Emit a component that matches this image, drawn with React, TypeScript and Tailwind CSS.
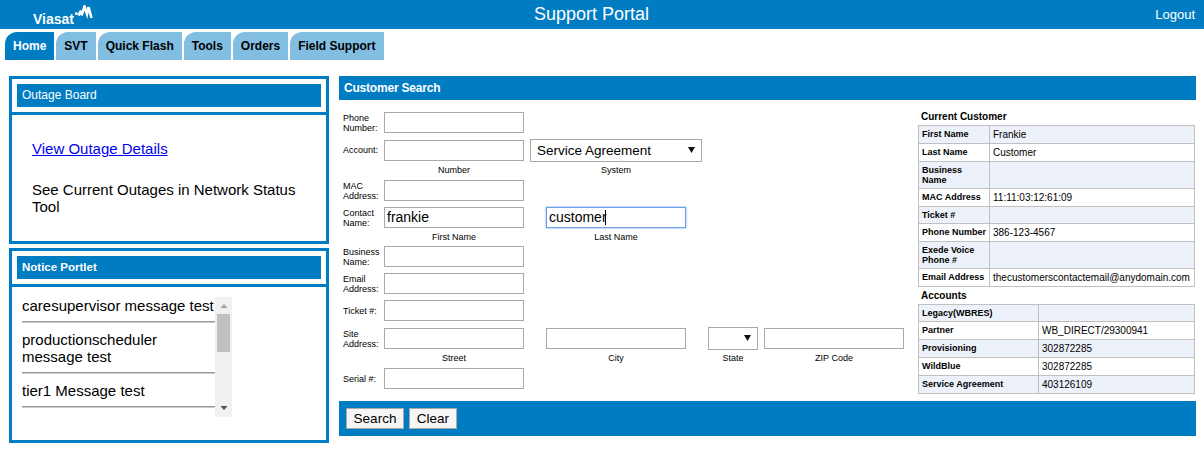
import React from "react";

const inputClass =
  "block h-[21px] w-[140px] border border-[#a9a9a9] bg-white px-[2px] text-[14px] text-black outline-none";

const Logo = () => (
  <div className="flex items-start pl-[33px] pt-[5px]">
    <span className="mt-[8px] text-[14px] font-bold leading-[12px] text-white">Viasat</span>
    <svg width="18" height="15" viewBox="0 0 18 15" className="ml-[1px]">
      <path
        d="M0.5 9.5 L2 7.5 M3.5 10.5 L6 5.5 M6.5 10.5 L9.5 1.5 L12 9 L13.5 2 L16.5 13"
        fill="none"
        stroke="white"
        strokeWidth="2.6"
      />
    </svg>
  </div>
);

const tabs = ["SVT", "Quick Flash", "Tools", "Orders", "Field Support"];

const Tabs = () => (
  <div className="mt-[3px] flex gap-[2px] pl-[5px] text-[12px] font-bold leading-[28px]">
    <div className="rounded-tl-[12px] bg-[#007cc2] px-[8px] text-white">Home</div>
    {tabs.map((t) => (
      <div key={t} className="rounded-tl-[12px] bg-[#82bde2] px-[8px] text-black">
        {t}
      </div>
    ))}
  </div>
);

const PortletBar = ({ title, bold }: { title: string; bold?: boolean }) => (
  <div className="border-[3px] border-[#007cc2] px-[5px] py-[5px]">
    <div className={`h-[23px] bg-[#007cc2] pl-[5px] leading-[23px] text-white ${bold ? "text-[11.5px] font-bold" : "text-[12px]"}`}>
      {title}
    </div>
  </div>
);

const OutageBoard = () => (
  <div className="w-[320px]">
    <PortletBar title="Outage Board" />
    <div className="-mt-[3px] h-[132px] border-[3px] border-[#007cc2] px-[20px] pt-[25px] text-[15px] leading-[17px]">
      <a href="#" className="text-[#0000ee] underline">
        View Outage Details
      </a>
      <p className="mt-[24px] text-black">See Current Outages in Network Status Tool</p>
    </div>
  </div>
);

const notices = ["caresupervisor message test", "productionscheduler message test", "tier1 Message test"];

const NoticeScrollbar = () => (
  <div className="flex h-[120px] w-[17px] flex-col items-center justify-between bg-[#f1f1f1]">
    <div className="flex w-full flex-1 flex-col items-center">
      <svg width="8" height="17" viewBox="0 0 8 17">
        <path d="M0.5 11 L4 7 L7.5 11 Z" fill="#a3a3a3" />
      </svg>
      <div className="h-[38px] w-[13px] bg-[#c1c1c1]" />
    </div>
    <svg width="8" height="17" viewBox="0 0 8 17">
      <path d="M0.5 6 L7.5 6 L4 10 Z" fill="#505050" />
    </svg>
  </div>
);

const NoticePortlet = () => (
  <div className="mt-[4px] w-[320px]">
    <PortletBar title="Notice Portlet" bold />
    <div className="-mt-[3px] h-[159px] border-[3px] border-[#007cc2] pl-[10px] pt-[10px]">
      <div className="flex">
        <div className="h-[120px] w-[193px] overflow-hidden text-[15px] leading-[17px] text-black">
          {notices.map((n) => (
            <div key={n} className="mb-[9px] border-b border-[#999999] pb-[7px] shadow-[0_1px_0_#cccccc]">
              {n}
            </div>
          ))}
        </div>
        <NoticeScrollbar />
      </div>
    </div>
  </div>
);

const Label = ({ children }: { children: React.ReactNode }) => (
  <div className="w-[45px] shrink-0 whitespace-nowrap pl-[4px] text-[9px] leading-[10px] text-black">{children}</div>
);

const Sub = ({ children, className }: { children: string; className: string }) => (
  <div className={`text-center text-[9px] leading-[12px] text-black ${className}`}>{children}</div>
);

const Arrow = () => (
  <svg width="7" height="6" viewBox="0 0 7 6" className="absolute right-[6px] top-[7px]">
    <path d="M0 0 L7 0 L3.5 6 Z" fill="#111111" />
  </svg>
);

const SearchForm = () => (
  <div className="w-[574px] pt-[12px]">
    <div className="flex h-[21px] items-center">
      <Label>
        Phone
        <br />
        Number:
      </Label>
      <input readOnly className={inputClass} />
    </div>

    <div className="mt-[6px] flex h-[23px] items-center">
      <div className="pb-[2px]">
        <Label>Account:</Label>
      </div>
      <input readOnly className={inputClass} />
      <div className="relative ml-[6px] h-[23px] w-[172px] border border-[#a9a9a9] bg-white pl-[6px] text-[13.5px] leading-[21px]">
        Service Agreement
        <Arrow />
      </div>
    </div>
    <div className="mt-[2px] flex pl-[45px]">
      <Sub className="w-[140px]">Number</Sub>
      <Sub className="ml-[6px] w-[172px]">System</Sub>
    </div>

    <div className="mt-[4px] flex h-[21px] items-center">
      <Label>
        MAC
        <br />
        Address:
      </Label>
      <input readOnly className={inputClass} />
    </div>

    <div className="mt-[6px] flex h-[21px] items-center">
      <Label>
        Contact
        <br />
        Name:
      </Label>
      <input readOnly defaultValue="frankie" className={inputClass} />
      <div className="relative ml-[22px]">
        <input
          readOnly
          defaultValue="customer"
          className="block h-[21px] w-[140px] border border-[#6d9eeb] bg-white px-[2px] text-[14px] text-black shadow-[0_0_2px_#6d9eeb] outline-none"
        />
        <div className="absolute left-[59px] top-[3px] h-[15px] w-px bg-black" />
      </div>
    </div>
    <div className="mt-[3px] flex pl-[45px]">
      <Sub className="w-[140px]">First Name</Sub>
      <Sub className="ml-[22px] w-[140px]">Last Name</Sub>
    </div>

    <div className="mt-[3px] flex h-[21px] items-center">
      <Label>
        Business
        <br />
        Name:
      </Label>
      <input readOnly className={inputClass} />
    </div>

    <div className="mt-[6px] flex h-[21px] items-center">
      <Label>
        Email
        <br />
        Address:
      </Label>
      <input readOnly className={inputClass} />
    </div>

    <div className="mt-[6px] flex h-[21px] items-center">
      <Label>Ticket #:</Label>
      <input readOnly className={inputClass} />
    </div>

    <div className="mt-[7px] flex h-[21px] items-center">
      <Label>
        Site
        <br />
        Address:
      </Label>
      <input readOnly className={inputClass} />
      <input readOnly className={`${inputClass} ml-[22px]`} />
      <div className="relative ml-[22px] h-[23px] w-[50px] border border-[#a9a9a9] bg-white">
        <Arrow />
      </div>
      <input readOnly className={`${inputClass} ml-[6px]`} />
    </div>
    <div className="mt-[3px] flex pl-[45px]">
      <Sub className="w-[140px]">Street</Sub>
      <Sub className="ml-[22px] w-[140px]">City</Sub>
      <Sub className="ml-[22px] w-[50px]">State</Sub>
      <Sub className="ml-[6px] w-[140px]">ZIP Code</Sub>
    </div>

    <div className="mt-[4px] flex h-[21px] items-center">
      <Label>Serial #:</Label>
      <input readOnly className={inputClass} />
    </div>
  </div>
);

type Row = { label: React.ReactNode; value: string; h: string };

const customerRows: Row[] = [
  { label: "First Name", value: "Frankie", h: "h-[18px]" },
  { label: "Last Name", value: "Customer", h: "h-[18px]" },
  { label: <>Business<br />Name</>, value: "", h: "h-[27px]" },
  { label: "MAC Address", value: "11:11:03:12:61:09", h: "h-[18px]" },
  { label: "Ticket #", value: "", h: "h-[17px]" },
  { label: "Phone Number", value: "386-123-4567", h: "h-[18px]" },
  { label: <>Exede Voice<br />Phone #</>, value: "", h: "h-[27px]" },
  { label: "Email Address", value: "thecustomerscontactemail@anydomain.com", h: "h-[18px]" },
];

const accountRows: Row[] = [
  { label: "Legacy(WBRES)", value: "", h: "h-[17px]" },
  { label: "Partner", value: "WB_DIRECT/29300941", h: "h-[18px]" },
  { label: "Provisioning", value: "302872285", h: "h-[18px]" },
  { label: "WildBlue", value: "302872285", h: "h-[18px]" },
  { label: "Service Agreement", value: "403126109", h: "h-[18px]" },
];

const InfoTable = ({ rows, labelWidth }: { rows: Row[]; labelWidth: string }) => (
  <table className="w-[277px] table-fixed border-collapse text-[10px] leading-[10px] text-black">
    <colgroup>
      <col className={labelWidth} />
      <col />
    </colgroup>
    <tbody>
      {rows.map((r, i) => (
        <tr key={i} className={`${r.h} ${i % 2 === 0 ? "bg-[#edf1f9]" : "bg-white"}`}>
          <td className="whitespace-nowrap border border-[#c0c0c0] px-[3px] pb-[1px] text-[9px] font-bold">{r.label}</td>
          <td className="whitespace-nowrap border border-[#c0c0c0] pl-[3px]">{r.value}</td>
        </tr>
      ))}
    </tbody>
  </table>
);

const CustomerInfo = () => (
  <div className="ml-[5px] pt-[11px]">
    <div className="pl-[3px] text-[10px] font-bold leading-[11px] text-black">Current Customer</div>
    <div className="mt-[3px]">
      <InfoTable rows={customerRows} labelWidth="w-[71px]" />
    </div>
    <div className="mt-[3px] pl-[3px] text-[10px] font-bold leading-[11px] text-black">Accounts</div>
    <div className="mt-[3px]">
      <InfoTable rows={accountRows} labelWidth="w-[120px]" />
    </div>
  </div>
);

const Button = ({ children, className }: { children: string; className: string }) => (
  <button className={`h-[21px] border border-[#a9a9a9] bg-[#f5f5f5] text-center text-[13.5px] leading-[19px] text-black ${className}`}>
    {children}
  </button>
);

export default function App() {
  return (
    <div className="h-[451px] w-[1204px] overflow-hidden bg-white font-['Liberation_Sans',Arial,sans-serif]">
      <header className="flex h-[29px] bg-[#007cc2] text-white">
        <div className="w-[200px]">
          <Logo />
        </div>
        <div className="flex-1 text-center text-[18px] leading-[28px]">Support Portal</div>
        <div className="w-[221px] pr-[9px] text-right text-[13px] leading-[29px]">Logout</div>
      </header>
      <Tabs />
      <div className="mt-[16px] flex pl-[9px]">
        <aside>
          <OutageBoard />
          <NoticePortlet />
        </aside>
        <main className="ml-[10px] w-[857px]">
          <div className="h-[24px] bg-[#007cc2] pl-[5px] text-[12px] font-bold leading-[24px] tracking-[-0.2px] text-white">
            Customer Search
          </div>
          <div className="flex h-[301px]">
            <SearchForm />
            <CustomerInfo />
          </div>
          <div className="flex h-[35px] items-center gap-[5px] bg-[#007cc2] pl-[7px]">
            <Button className="w-[58px]">Search</Button>
            <Button className="w-[48px]">Clear</Button>
          </div>
        </main>
      </div>
    </div>
  );
}
